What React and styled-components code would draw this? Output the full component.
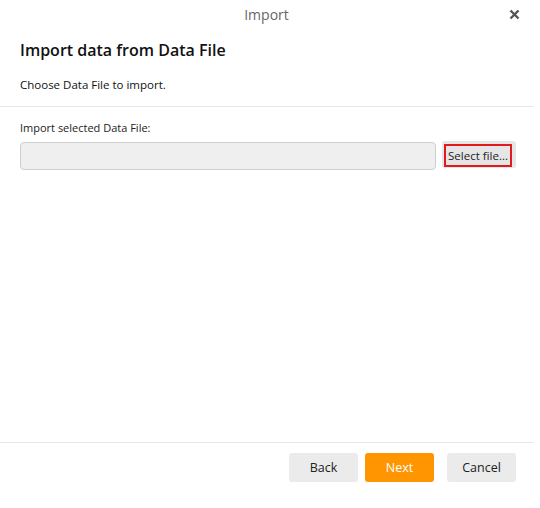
import React from "react";
import styled, { createGlobalStyle } from "styled-components";

const GlobalStyle = createGlobalStyle`
  html, body {
    margin: 0;
    padding: 0;
    background: #ffffff;
  }
  body {
    font-family: "Open Sans", "Noto Sans", "Liberation Sans", sans-serif;
  }
`;

const Dialog = styled.div`
  width: 533px;
  height: 508px;
  display: flex;
  flex-direction: column;
  background: #fff;
`;

const TitleBar = styled.div`
  position: relative;
  height: 30px;
  display: flex;
  align-items: center;
  justify-content: center;
  font-size: 14px;
  color: #666;
  padding-bottom: 2px;
  box-sizing: border-box;
`;

const CloseButton = styled.button`
  position: absolute;
  right: 11px;
  top: 6px;
  width: 16px;
  height: 16px;
  padding: 0;
  border: 0;
  background: none;
  display: flex;
  align-items: center;
  justify-content: center;
  cursor: pointer;
`;

const Header = styled.div`
  padding: 8px 20px 0;
  height: 77px;
  box-sizing: border-box;
  border-bottom: 1px solid #e6e6e6;
`;

const Heading = styled.h1`
  margin: 0;
  font-size: 16px;
  font-weight: 600;
  color: #111;
  line-height: 24px;
`;

const Subtitle = styled.p`
  margin: 15px 0 0;
  font-size: 11.5px;
  color: #111;
  line-height: 16px;
`;

const Body = styled.div`
  flex: 1;
  padding: 13px 17px 0 20px;
  border-bottom: 1px solid #e6e6e6;
`;

const Label = styled.div`
  font-size: 11px;
  color: #222;
  line-height: 16px;
`;

const FileRow = styled.div`
  margin-top: 5px;
  display: flex;
  gap: 6px;
`;

const PathInput = styled.div`
  flex: 1;
  height: 26px;
  margin-top: 1px;
  border: 1px solid #cfcfcf;
  border-radius: 4px;
  background: #efefef;
`;

const SelectButton = styled.button`
  width: 74px;
  height: 27px;
  padding: 3px 4px 1px 2px;
  border: 0;
  border-radius: 3px;
  background: #e6e6e6;
  font-family: inherit;
  cursor: pointer;
`;

const Highlight = styled.span`
  display: flex;
  align-items: center;
  justify-content: center;
  height: 100%;
  box-sizing: border-box;
  border: 2px solid #e4181f;
  font-size: 11.5px;
  color: #222;
`;

const Footer = styled.div`
  height: 65px;
  padding: 10px 17px 0 0;
  box-sizing: border-box;
  display: flex;
  justify-content: flex-end;
  gap: 7px;
`;

const FooterButton = styled.button`
  width: 69px;
  height: 29px;
  border: 0;
  border-radius: 3px;
  margin-left: ${p => (p.$spaced ? "6px" : "0")};
  background: ${p => (p.$primary ? "#ff9500" : "#ebebeb")};
  color: ${p => (p.$primary ? "#fff" : "#222")};
  font-family: inherit;
  font-size: 12.5px;
  cursor: pointer;
`;

export default function App() {
  return (
    <>
      <GlobalStyle />
      <Dialog>
        <TitleBar>
          Import
          <CloseButton aria-label="Close">
            <svg width="11" height="11" viewBox="0 0 11 11">
              <path
                d="M1.5 1.5 L9.5 9.5 M9.5 1.5 L1.5 9.5"
                stroke="#555"
                strokeWidth="2.4"
                strokeLinecap="butt"
              />
            </svg>
          </CloseButton>
        </TitleBar>
        <Header>
          <Heading>Import data from Data File</Heading>
          <Subtitle>Choose Data File to import.</Subtitle>
        </Header>
        <Body>
          <Label>Import selected Data File:</Label>
          <FileRow>
            <PathInput />
            <SelectButton>
              <Highlight>Select file...</Highlight>
            </SelectButton>
          </FileRow>
        </Body>
        <Footer>
          <FooterButton>Back</FooterButton>
          <FooterButton $primary>Next</FooterButton>
          <FooterButton $spaced>Cancel</FooterButton>
        </Footer>
      </Dialog>
    </>
  );
}
